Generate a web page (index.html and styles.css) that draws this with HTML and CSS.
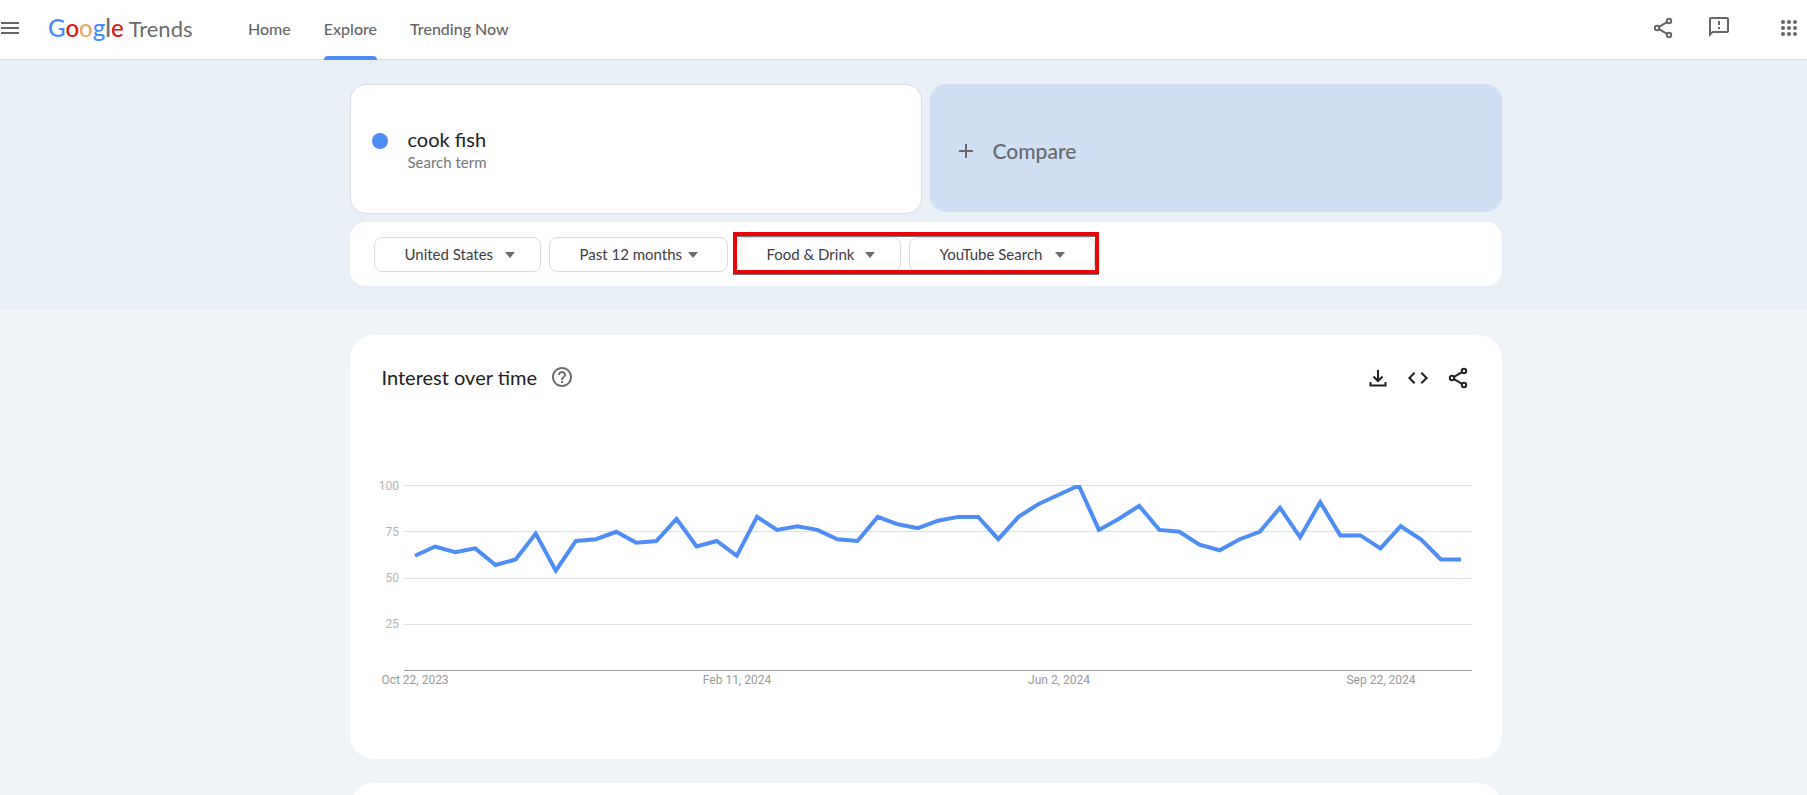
FILE: index.html
```html
<!DOCTYPE html>
<html lang="en">
<head>
<meta charset="utf-8">
<title>cook fish - Explore - Google Trends</title>
<link rel="stylesheet" href="styles.css">
</head>
<body>
<header class="topbar">
  <button class="icon-btn menu" aria-label="Main menu">
    <svg viewBox="0 0 18 12" width="18" height="12"><path d="M0 1h18M0 6h18M0 11h18" stroke="currentColor" stroke-width="2"/></svg>
  </button>
  <a class="logo" href="#"><span class="google"><span class="g-blue">G</span><span class="g-red">o</span><span class="g-yellow">o</span><span class="g-blue">g</span><span class="g-gray">l</span><span class="g-red">e</span></span><span class="product">Trends</span></a>
  <nav class="nav">
    <a href="#">Home</a>
    <a href="#" class="active" aria-current="page">Explore</a>
    <a href="#">Trending Now</a>
  </nav>
  <div class="top-actions">
    <button class="icon-btn" aria-label="Share">
      <svg viewBox="0 0 24 24" width="24" height="24" fill="none" stroke="currentColor" stroke-width="2"><circle cx="18" cy="5" r="2.2"/><circle cx="6" cy="12" r="2.2"/><circle cx="18" cy="19" r="2.2"/><path d="M8 10.900l8-4.700M8 13.100l8 4.700"/></svg>
    </button>
    <button class="icon-btn feedback" aria-label="Send feedback">
      <svg viewBox="0 0 24 24" width="24" height="24" fill="currentColor"><path d="M20 2H4c-1.100 0-2 .9-2 2v18l4-4h14c1.100 0 2-.9 2-2V4c0-1.100-.9-2-2-2zm0 14H5.200L4 17.200V4h16v12zM11 6h2v4h-2zM11 12h2v2h-2z"/></svg>
    </button>
    <button class="icon-btn apps" aria-label="Google apps">
      <svg viewBox="0 0 24 24" width="24" height="24" fill="currentColor"><circle cx="6" cy="6" r="2"/><circle cx="12" cy="6" r="2"/><circle cx="18" cy="6" r="2"/><circle cx="6" cy="12" r="2"/><circle cx="12" cy="12" r="2"/><circle cx="18" cy="12" r="2"/><circle cx="6" cy="18" r="2"/><circle cx="12" cy="18" r="2"/><circle cx="18" cy="18" r="2"/></svg>
    </button>
  </div>
</header>

<section class="band search">
  <div class="content">
    <div class="terms">
      <div class="term">
        <span class="dot"></span>
        <div>
          <div class="term-name">cook fish</div>
          <div class="term-type">Search term</div>
        </div>
      </div>
      <button class="compare">
        <svg viewBox="0 0 14 14" width="14" height="14"><path d="M7 0v14M0 7h14" stroke="currentColor" stroke-width="2"/></svg>
        <span>Compare</span>
      </button>
    </div>
    <div class="filters">
      <div class="filter country"><select aria-label="Location"><option>United States</option></select></div>
      <div class="filter period"><select aria-label="Time range"><option>Past 12 months</option></select></div>
      <div class="highlight">
        <div class="filter category"><select aria-label="Category"><option>Food &amp; Drink</option></select></div>
        <div class="filter source"><select aria-label="Search type"><option>YouTube Search</option></select></div>
      </div>
    </div>
  </div>
</section>

<main class="band">
  <div class="content cards">
    <section class="card">
      <div class="card-head">
        <h2>Interest over time</h2>
        <button class="icon-btn help" aria-label="Help">
          <svg viewBox="0 0 24 24" width="24" height="24" fill="currentColor"><path d="M11 18h2v-2h-2v2zm1-16C6.480 2 2 6.480 2 12s4.480 10 10 10 10-4.480 10-10S17.520 2 12 2zm0 18c-4.410 0-8-3.590-8-8s3.590-8 8-8 8 3.590 8 8-3.590 8-8 8zm0-14c-2.210 0-4 1.790-4 4h2c0-1.100.9-2 2-2s2 .9 2 2c0 2-3 1.750-3 5h2c0-2.250 3-2.500 3-5 0-2.210-1.790-4-4-4z"/></svg>
        </button>
        <div class="card-actions">
          <button class="icon-btn" aria-label="Download CSV">
            <svg viewBox="0 0 24 24" width="24" height="24" fill="none" stroke="currentColor" stroke-width="2"><path d="M12 4v11M7.500 10.500L12 15l4.500-4.500M4.500 16v3.500h15V16"/></svg>
          </button>
          <button class="icon-btn" aria-label="Embed">
            <svg viewBox="0 0 24 24" width="24" height="24" fill="none" stroke="currentColor" stroke-width="2"><path d="M8.700 6.700L3.400 12l5.300 5.300M15.300 6.700l5.300 5.300-5.300 5.300"/></svg>
          </button>
          <button class="icon-btn" aria-label="Share chart">
            <svg viewBox="0 0 24 24" width="24" height="24" fill="none" stroke="currentColor" stroke-width="2"><circle cx="18" cy="5" r="2.200"/><circle cx="6" cy="12" r="2.200"/><circle cx="18" cy="19" r="2.200"/><path d="M8 10.900l8-4.700M8 13.100l8 4.700"/></svg>
          </button>
        </div>
      </div>
      <svg class="chart" viewBox="0 0 1152 220" role="img" aria-label="Interest over time for cook fish">
        <g class="grid"><path d="M54 10.500h1068M54 56.500h1068M54 103.500h1068M54 149.500h1068"/></g>
        <path class="axis" d="M54 195.500h1068"/>
        <g class="y-labels"><text x="49" y="15">100</text><text x="49" y="61">75</text><text x="49" y="107">50</text><text x="49" y="153">25</text></g>
        <g class="x-labels"><text x="65" y="209">Oct 22, 2023</text><text x="387" y="209">Feb 11, 2024</text><text x="709" y="209">Jun 2, 2024</text><text x="1031" y="209">Sep 22, 2024</text></g>
        <clipPath id="plot"><path d="M54 10h1068v186H54z"/></clipPath>
        <polyline class="series" id="series" clip-path="url(#plot)"/>
      </svg>
    </section>
    <section class="card"></section>
  </div>
</main>
<script src="chart.js"></script>
</body>
</html>
```
FILE: styles.css
```css
* { box-sizing: border-box; }
body {
  margin: 0;
  height: 100vh;
  overflow: hidden;
  background: #f0f3f8;
  color: #202124;
  font-family: Lato, "Open Sans", sans-serif;
}
a { color: inherit; text-decoration: none; }
button, select { font: inherit; color: inherit; }
svg { display: block; }
.icon-btn { border: 0; padding: 0; background: none; color: inherit; cursor: pointer; }

.topbar {
  display: flex;
  align-items: center;
  height: 60px;
  padding: 0 6px 0 1px;
  background: #fff;
  border-bottom: 1px solid #dadce0;
  color: #666;
}
.menu { margin-bottom: 3px; }
.logo { display: flex; align-items: baseline; gap: 5px; margin: 0 0 4px 29px; width: 200px; }
.google { font-size: 24px; font-weight: 500; }
.product { font-size: 22px; color: #6b6c6e; }
.g-blue { color: #4a8cf7; }
.g-red { color: #e01507; }
.g-yellow { color: #e9a95f; }
.g-gray { color: #6b6c6e; }
.nav { display: flex; gap: 33px; height: 60px; font-size: 16px; font-weight: 500; line-height: 58px; white-space: nowrap; }
.nav .active { position: relative; }
.nav .active::after {
  content: "";
  position: absolute;
  inset: auto 0 0;
  height: 4px;
  border-radius: 4px 4px 0 0;
  background: #4c8df6;
}
.top-actions { display: flex; align-items: center; gap: 32px; margin: 0 0 3px auto; }
.feedback { margin-bottom: 2px; }
.apps { margin-left: 14px; }

.band { padding-left: 44px; }
.content { max-width: 1152px; margin: 0 auto; }
.search { padding-top: 24px; padding-bottom: 24px; background: #e8eff7; }
.terms { display: grid; grid-template-columns: 1fr 1fr; align-items: start; gap: 8px; }
.term {
  display: flex;
  gap: 20px;
  height: 130px;
  padding: 42px 21px 0;
  background: #fff;
  border: 1px solid #dadce0;
  border-radius: 16px;
}
.dot { width: 16px; height: 16px; margin-top: 6px; border-radius: 50%; background: #4c8df6; }
.term-name { font-size: 20px; line-height: 24px; }
.term-type { font-size: 15px; line-height: 22px; color: #757779; }
.compare {
  display: flex;
  align-items: center;
  gap: 20px;
  height: 128px;
  padding: 5px 29px 0;
  border: 0;
  border-radius: 16px;
  background: #d1dff4;
  color: #666a6e;
  font-size: 21px;
  font-weight: 500;
}
.filters {
  display: flex;
  gap: 8px;
  margin-top: 8px;
  padding: 15px 24px 14px;
  background: #fff;
  border-radius: 16px;
}
.filter { position: relative; }
.filter select {
  appearance: none;
  width: 100%;
  height: 35px;
  padding: 0 0 2px 30px;
  border: 1px solid #dadce0;
  border-radius: 8px;
  background: #fff;
  color: #3c3e42;
  font-size: 15px;
}
.filter::after {
  content: "";
  position: absolute;
  top: 15px;
  right: 26px;
  border: solid transparent;
  border-width: 6px 5px 0;
  border-top-color: #6b6b6b;
  pointer-events: none;
}
.country { width: 167px; }
.period { width: 179px; }
.category { width: 165px; }
.source { width: 186px; }
.period::after, .source::after { right: 30px; }
.highlight { position: relative; display: flex; gap: 8px; }
.highlight::after {
  content: "";
  position: absolute;
  inset: -5px -4px -2px -3px;
  border: 4px solid #e80505;
  box-shadow: 0 1px 0 #777, inset 0 1px 0 #777;
  pointer-events: none;
}

.cards { display: grid; gap: 24px; padding-top: 25px; }
.card { min-height: 424px; background: #fff; border-radius: 24px; }
.card-head { display: flex; align-items: center; height: 86px; padding: 0 32px; }
.card-head h2 { margin: 0 0 2px; font-size: 20px; font-weight: 400; }
.help { margin: 0 0 2px 13px; color: #6b6c6e; }
.card-actions { display: flex; gap: 16px; margin-left: auto; }
.chart { width: 100%; margin-top: 54px; font-family: Roboto, sans-serif; font-size: 12px; }
.grid { stroke: #e0e0e0; }
.axis { stroke: #9a9a9a; }
.y-labels { fill: #b5b5b5; text-anchor: end; }
.x-labels { fill: #999; text-anchor: middle; }
.series { fill: none; stroke: #4c8df6; stroke-width: 4; }
```
FILE: chart.js
```js
const values = [62, 67, 64, 66, 57, 60, 74, 54, 70, 71, 75, 69, 70, 82, 67, 70, 62, 83, 76, 78, 76, 71, 70, 83, 79, 77, 81, 83, 83, 71, 83, 90, 95, 100, 76, 82, 89, 76, 75, 68, 65, 71, 75, 88, 72, 91, 73, 73, 66, 78, 71, 60, 60];
const first = 65, last = 1111, base = 195.5, top100 = 10.5;
const step = (last - first) / (values.length - 1);
document.getElementById("series").setAttribute("points", values
  .map((v, i) => `${(first + i * step).toFixed(1)},${(base - v * (base - top100) / 100).toFixed(1)}`)
  .join(" "));
```
